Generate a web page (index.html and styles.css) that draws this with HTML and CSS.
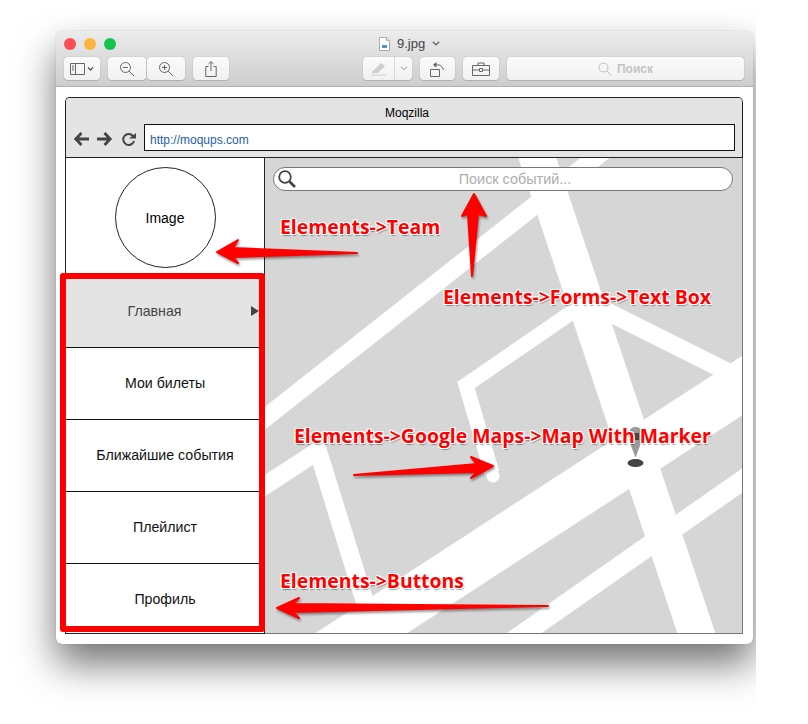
FILE: index.html
```html
<!DOCTYPE html>
<html lang="en">
<head>
  <meta charset="UTF-8">
  <meta name="viewport" content="width=device-width, initial-scale=1.0">
  <title>9.jpg</title>
  <link rel="stylesheet" href="styles.css">
</head>
<body>
  <div class="stage">
    <div class="window">
      <div class="titlebar">
        <div class="titlerow">
          <div class="lights">
            <span class="light red"></span>
            <span class="light orange"></span>
            <span class="light green"></span>
          </div>
          <div class="title">
            <svg width="11" height="14" viewBox="0 0 11 14"><path d="M.5.5h7l3 3v10H.5z" fill="#fff" stroke="#aaa"/><path d="M3 8h5v3H3z" fill="#5a8fc4"/><path d="M7.500.5v3h3" fill="#ddd" stroke="#aaa"/></svg>
            <span>9.jpg</span>
            <svg width="8" height="5" viewBox="0 0 8 5"><path d="M.8.8 4 3.800 7.200.8" fill="none" stroke="#666" stroke-width="1.300"/></svg>
          </div>
        </div>
        <div class="toolbar">
          <div class="btn btn-side">
            <svg width="24" height="14" viewBox="0 0 24 14"><path d="M.5 1.500h14v11H.5zM5.500 1.500v11M2 4h2M2 6h2M2 8h2" fill="none" stroke="#666"/><path d="M18 5.500l2.500 2.500L23 5.500" fill="none" stroke="#555" stroke-width="1.300"/></svg>
          </div>
          <div class="btn btn-zoom">
            <svg width="16" height="16" viewBox="0 0 16 16"><circle cx="6.500" cy="6.500" r="5" fill="none" stroke="#666"/><path d="M10.200 10.200 15 15M4 6.500h5" fill="none" stroke="#666"/></svg>
          </div>
          <div class="btn btn-zoom second">
            <svg width="16" height="16" viewBox="0 0 16 16"><circle cx="6.500" cy="6.500" r="5" fill="none" stroke="#666"/><path d="M10.200 10.200 15 15M4 6.500h5M6.500 4v5" fill="none" stroke="#666"/></svg>
          </div>
          <div class="btn btn-share">
            <svg width="12" height="16" viewBox="0 0 12 16"><path d="M3.500 5.500H.8v10h10.400v-10H8.500M6 10V.8M3.500 3 6 .6 8.500 3" fill="none" stroke="#666"/></svg>
          </div>
          <div class="btn btn-edit">
            <div class="edit-main">
              <svg width="16" height="14" viewBox="0 0 16 14"><path d="M1 10 10 1l4 3-7 7H1z" fill="#cfcfcf"/><path d="M0 13h15" stroke="#cfcfcf"/></svg>
            </div>
            <div class="edit-more">
              <svg width="8" height="5" viewBox="0 0 8 5"><path d="M.8.8 4 3.800 7.200.8" fill="none" stroke="#bbb" stroke-width="1.200"/></svg>
            </div>
          </div>
          <div class="btn btn-rotate">
            <svg width="15" height="16" viewBox="0 0 15 16"><path d="M.5 8.500h9v7h-9zM4 5.500C6 2.800 12 2.800 13.500 9" fill="none" stroke="#666"/><path d="M6.500 1 3 3.500l3.500 3z" fill="#666"/></svg>
          </div>
          <div class="btn btn-tools">
            <svg width="18" height="14" viewBox="0 0 18 14"><path d="M.5 3.500h17v10H.5zM.5 8h7M10.500 8h7M6 3.500V1h6v2.500M7.500 6.500h3v3h-3z" fill="none" stroke="#666"/></svg>
          </div>
          <div class="btn btn-search">
            <svg width="14" height="14" viewBox="0 0 14 14"><circle cx="5.500" cy="5.500" r="4.500" fill="none" stroke="#bbb"/><path d="M9 9l4.500 4.500" stroke="#bbb"/></svg>
            <span>Поиск</span>
          </div>
        </div>
      </div>
      <div class="content">
        <div class="mock">
          <div class="mock-head">
            <div class="mock-title">Moqzilla</div>
            <div class="mock-nav">
              <svg class="nav-icons" width="63" height="16" viewBox="0 0 63 16">
                <path d="M15 8H2M7.500 2 1.800 8l5.700 6" fill="none" stroke="#444" stroke-width="2.800"/>
                <path d="M23 8h13M30.500 2l5.700 6-5.700 6" fill="none" stroke="#444" stroke-width="2.800"/>
                <path d="M59 5A5.500 5.500 0 1 0 60 10" fill="none" stroke="#444" stroke-width="2"/>
                <path d="M55 7.500h7V2z" fill="#444"/>
              </svg>
              <div class="url">http://moqups.com</div>
            </div>
          </div>
          <div class="mock-body">
            <div class="side">
              <div class="team"><div class="avatar">Image</div></div>
              <div class="item active">Главная<span class="caret"></span></div>
              <div class="item">Мои билеты</div>
              <div class="item">Ближайшие события</div>
              <div class="item">Плейлист</div>
              <div class="item">Профиль</div>
            </div>
            <div class="map">
              <svg class="roads" width="477" height="475" viewBox="265 158 477 475">
                <g fill="none" stroke="#fff" stroke-linejoin="miter">
                  <path d="M255 426 610 146" stroke-width="18"/>
                  <path d="M533 145 702 650" stroke-width="36"/>
                  <path d="M330 653.500 760 374" stroke-width="50"/>
                  <path d="M600 308 730 373" stroke-width="18"/>
                  <path d="M492 473 466 385 578 308" stroke-width="15"/>
                  <circle cx="493" cy="476" r="6.500" fill="#fff" stroke="none"/>
                  <path d="M255 492 318 451 368 612" stroke-width="18"/>
                  <path d="M490 657 760 468" stroke-width="20"/>
                </g>
                <path d="M629 434c0-9 13-9 13 0l-1 8-5.500 15-5.500-15z" fill="#9a9a9a" stroke="#888" stroke-width=".5"/>
                <rect x="633" y="433" width="6" height="7" fill="#444"/>
                <ellipse cx="635.500" cy="463" rx="8" ry="4" fill="#444"/>
              </svg>
              <div class="searchbox">
                <svg class="search-icon" width="20" height="20" viewBox="0 0 20 20"><circle cx="8" cy="8" r="5.800" fill="none" stroke="#444" stroke-width="1.800"/><path d="M12.500 12.500 18 18" stroke="#444" stroke-width="2.600"/></svg>
                <span>Поиск событий...</span>
              </div>
            </div>
          </div>
        </div>
      </div>
    </div>

    <div class="frame"></div>
    <svg class="arrows" width="756" height="724" viewBox="0 0 756 724">
      <g fill="#f00" stroke="#f00" stroke-width="2" stroke-linejoin="round">
        <path d="M217 252 238 240 233 248 357 253 233 257 238 263z"/>
        <path d="M474 194 486 216 478 214 472 276 468 214 462 216z"/>
        <path d="M493 466 471 457 477 464 354 475 477 472 471 478z"/>
        <path d="M277 608 299 598 293 604 548 606 293 612 299 618z"/>
      </g>
    </svg>
    <div class="note note-team">Elements-&gt;Team</div>
    <div class="note note-box">Elements-&gt;Forms-&gt;Text Box</div>
    <div class="note note-map">Elements-&gt;Google Maps-&gt;Map With Marker</div>
    <div class="note note-btn">Elements-&gt;Buttons</div>
  </div>
</body>
</html>
```

FILE: styles.css
```css
*{
  box-sizing: border-box;
  margin: 0;
  padding: 0;
}
body{
  background: #fff;
  font-family: "Liberation Sans", Arial, sans-serif;
  font-size: 14px;
  color: #111;
}
.stage{
  position: relative;
  width: 756px;
  height: 724px;
  padding: 31px 0 0 56px;
  overflow: hidden;
}
.window{
  width: 697px;
  height: 613px;
  background: #fff;
  border-radius: 6px;
  box-shadow: 0 20px 38px rgba(0,0,0,.55), 0 0 1px rgba(0,0,0,.4);
  overflow: hidden;
}

/* title bar */
.titlebar{
  height: 56px;
  padding: 0 9px 0 8px;
  background: linear-gradient(#ececec, #cdcdcd);
  border-bottom: 1px solid #b1b1b1;
}
.titlerow{
  display: flex;
  align-items: center;
  height: 25px;
}
.lights{
  display: flex;
  gap: 8px;
}
.light{
  width: 12px;
  height: 12px;
  border-radius: 50%;
}
.red{ background: #fc4c56; }
.orange{ background: #fdb43c; }
.green{ background: #12c64c; }
.title{
  display: flex;
  align-items: center;
  gap: 7px;
  margin-left: 263px;
  font-size: 13px;
  color: #444;
}
.toolbar{
  display: flex;
  gap: 8px;
  height: 23px;
  margin-top: 1px;
}
.btn{
  display: flex;
  align-items: center;
  justify-content: center;
  height: 23px;
  background: linear-gradient(#fbfbfb, #f1f1f1);
  border-radius: 4px;
  box-shadow: 0 0 1px rgba(0,0,0,.45), 0 1px 0 rgba(0,0,0,.1);
}
.btn-side{ width: 36px; }
.btn-zoom{ width: 38px; }
.btn-zoom.second{ margin-left: -7px; }
.btn-share{ width: 36px; }
.btn-edit{
  width: 49px;
  margin-left: 126px;
}
.edit-main{
  display: flex;
  align-items: center;
  justify-content: center;
  width: 32px;
  height: 23px;
  border-right: 1px solid #d8d8d8;
}
.edit-more{
  display: flex;
  align-items: center;
  justify-content: center;
  width: 17px;
  height: 23px;
}
.btn-rotate{ width: 35px; }
.btn-tools{ width: 36px; }
.btn-search{
  flex: 1;
  gap: 5px;
  font-size: 12px;
  font-weight: bold;
  color: #c4c4c4;
}

/* mockup */
.content{
  padding: 10px 10px 0 9px;
}
.mock{
  width: 678px;
  height: 537px;
  border-left: 1px solid #222;
  border-top: 1px solid #222;
  border-radius: 5px 5px 0 0;
  overflow: hidden;
}
.mock-head{
  height: 60px;
  background: #e4e4e4;
  border-bottom: 1px solid #222;
  border-right: 1px solid #222;
  border-radius: 0 4px 0 0;
}
.mock-title{
  padding: 8px 0 0 6px;
  height: 26px;
  font-size: 12px;
  line-height: 15px;
  text-align: center;
  color: #000;
}
.mock-nav{
  display: flex;
  align-items: center;
  padding: 0 7px 0 8px;
}
.nav-icons{
  margin-right: 7px;
  margin-top: 2px;
}
.url{
  flex: 1;
  height: 27px;
  padding: 8px 0 0 5px;
  background: #fff;
  border: 1px solid #111;
  font-size: 12px;
  line-height: 15px;
  color: #2460ac;
}
.mock-body{
  display: flex;
  height: 476px;
}
.side{
  display: flex;
  flex-direction: column;
  width: 199px;
  border-right: 1px solid #222;
  border-bottom: 1px solid #222;
}
.team{
  display: flex;
  align-items: center;
  justify-content: center;
  height: 118px;
  padding-top: 1px;
}
.avatar{
  display: flex;
  align-items: center;
  justify-content: center;
  width: 101px;
  height: 101px;
  border: 1px solid #222;
  border-radius: 50%;
  font-size: 14px;
  color: #000;
}
.item{
  position: relative;
  display: flex;
  align-items: center;
  justify-content: center;
  height: 72px;
  padding-bottom: 2px;
  border-bottom: 1px solid #111;
  font-size: 14.200px;
  color: #111;
}
.item:last-child{
  flex: 1;
  padding-bottom: 0;
  border-bottom: none;
}
.item.active{
  padding-right: 21px;
  background: #e4e4e4;
  color: #444;
}
.caret{
  position: absolute;
  top: 30px;
  right: 5px;
  border-left: 8px solid #444;
  border-top: 5px solid transparent;
  border-bottom: 5px solid transparent;
}
.map{
  position: relative;
  flex: 1;
  background: #d6d6d6;
  border-right: 1px solid #777;
  border-bottom: 1px solid #777;
  overflow: hidden;
}
.roads{
  display: block;
}
.searchbox{
  position: absolute;
  top: 9px;
  left: 8px;
  display: flex;
  align-items: center;
  justify-content: center;
  width: 460px;
  height: 24px;
  padding-left: 24px;
  background: #fff;
  border: 1px solid #777;
  border-radius: 12px;
  font-size: 14.400px;
  color: #aeaeae;
}
.search-icon{
  position: absolute;
  top: 1px;
  left: 3px;
}

/* annotations over the screenshot */
.frame{
  position: absolute;
  top: 273px;
  left: 60px;
  width: 205px;
  height: 359px;
  border: 6px solid #f00;
  border-radius: 3px;
}
.arrows{
  position: absolute;
  top: 0;
  left: 0;
  filter: drop-shadow(1px 2px 1px rgba(0,0,0,.4));
}
.note{
  position: absolute;
  font-family: "Open Sans", sans-serif;
  font-size: 19.400px;
  font-weight: bold;
  line-height: 24px;
  white-space: nowrap;
  color: #f00;
  text-shadow: 1px 0 0 #fff, -1px 0 0 #fff, 0 1px 0 #fff, 0 -1px 0 #fff, 1px 1px 0 #fff, -1px -1px 0 #fff, 1px -1px 0 #fff, -1px 1px 0 #fff, 1px 2px 1px rgba(0,0,0,.35);
}
.note-team{ top: 215px; left: 280px; }
.note-box{ top: 285px; left: 443px; }
.note-map{ top: 424px; left: 294px; }
.note-btn{ top: 569px; left: 280px; }
```
